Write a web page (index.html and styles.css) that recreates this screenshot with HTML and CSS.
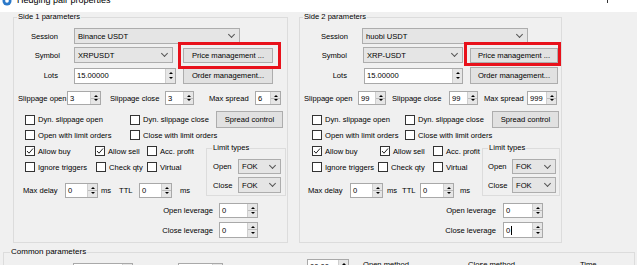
FILE: index.html
```html
<!DOCTYPE html>
<html lang="en">

<head>
    <meta charset="UTF-8">
    <title>Hedging pair properties</title>
    <link rel="stylesheet" href="styles.css">
</head>

<body>
    <!-- window title, cut off at the top -->
    <div class="titlebar">
        <svg class="title-icon" width="10" height="10" viewBox="0 0 10 10">
            <circle cx="5" cy="5" r="4.5" fill="#2b79c9" />
            <circle cx="5" cy="5" r="1.8" fill="#fff" />
        </svg>
        <span class="title-text">Hedging pair properties</span>
        <span class="title-btn"></span>
    </div>

    <div class="dialog">
        <!-- side 1 -->
        <div class="group side side1">
            <span class="group-title">Side 1 parameters</span>
            <div class="row row-session">
                <span class="lbl r l-session">Session</span>
                <div class="combo c-session"><span>Binance USDT</span></div>
            </div>
            <div class="row row-symbol">
                <span class="lbl r l-symbol">Symbol</span>
                <div class="combo c-symbol"><span>XRPUSDT</span></div>
                <div class="mark"><div class="btn b-price">Price management ...</div></div>
            </div>
            <div class="row row-lots">
                <span class="lbl r l-lots">Lots</span>
                <div class="num n-lots"><span>15.00000</span><i class="spin"></i></div>
                <div class="btn b-order">Order management...</div>
            </div>
            <div class="row row-slip">
                <span class="lbl l-slipopen">Slippage open</span>
                <div class="num n-slipopen"><span>3</span><i class="spin"></i></div>
                <span class="lbl l-slipclose">Slippage close</span>
                <div class="num n-slipclose"><span>3</span><i class="spin"></i></div>
                <span class="lbl l-maxspread">Max spread</span>
                <div class="num n-maxspread"><span>6</span><i class="spin"></i></div>
            </div>
            <div class="row row-dyn">
                <label class="chk k-dynopen"><i class="box"></i>Dyn. slippage open</label>
                <label class="chk k-dynclose"><i class="box"></i>Dyn. slippage close</label>
                <div class="btn b-spread">Spread control</div>
            </div>
            <div class="row row-limit">
                <label class="chk k-openlimit"><i class="box"></i>Open with limit orders</label>
                <label class="chk"><i class="box"></i>Close with limit orders</label>
            </div>
            <div class="lower">
                <div class="lower-left">
                    <div class="row row-buy">
                        <label class="chk k-buy"><i class="box"><svg width="8" height="8" viewBox="0 0 8 8"><polyline points="1,4 3,6.2 7,1.5" fill="none" stroke="#222" stroke-width="1" /></svg></i>Allow buy</label>
                        <label class="chk k-sell"><i class="box"><svg width="8" height="8" viewBox="0 0 8 8"><polyline points="1,4 3,6.2 7,1.5" fill="none" stroke="#222" stroke-width="1" /></svg></i>Allow sell</label>
                        <label class="chk"><i class="box"></i>Acc. profit</label>
                    </div>
                    <div class="row row-ignore">
                        <label class="chk k-ignore"><i class="box"></i>Ignore triggers</label>
                        <label class="chk k-qty"><i class="box"></i>Check qty</label>
                        <label class="chk"><i class="box"></i>Virtual</label>
                    </div>
                    <div class="row row-delay">
                        <span class="lbl l-maxdelay">Max delay</span>
                        <div class="num n-maxdelay"><span>0</span><i class="spin"></i></div>
                        <span class="lbl l-ms1">ms</span>
                        <span class="lbl l-ttl">TTL</span>
                        <div class="num n-ttl"><span>0</span><i class="spin"></i></div>
                        <span class="lbl l-ms2">ms</span>
                    </div>
                </div>
                <div class="group limits">
                    <span class="group-title">Limit types</span>
                    <div class="row row-open">
                        <span class="lbl l-open">Open</span>
                        <div class="combo c-open"><span>FOK</span></div>
                    </div>
                    <div class="row row-close">
                        <span class="lbl l-close">Close</span>
                        <div class="combo c-close"><span>FOK</span></div>
                    </div>
                </div>
            </div>
            <div class="row row-lev row-openlev">
                <span class="lbl r l-lev">Open leverage</span>
                <div class="num n-lev"><span>0</span><i class="spin"></i></div>
            </div>
            <div class="row row-lev row-closelev">
                <span class="lbl r l-lev">Close leverage</span>
                <div class="num n-lev"><span>0</span><i class="spin"></i></div>
            </div>
        </div>

        <!-- side 2 -->
        <div class="group side side2">
            <span class="group-title">Side 2 parameters</span>
            <div class="row row-session">
                <span class="lbl r l-session">Session</span>
                <div class="combo c-session"><span>huobi USDT</span></div>
            </div>
            <div class="row row-symbol">
                <span class="lbl r l-symbol">Symbol</span>
                <div class="combo c-symbol"><span>XRP-USDT</span></div>
                <div class="mark"><div class="btn b-price">Price management ...</div></div>
            </div>
            <div class="row row-lots">
                <span class="lbl r l-lots">Lots</span>
                <div class="num n-lots"><span>15.00000</span><i class="spin"></i></div>
                <div class="btn b-order">Order management...</div>
            </div>
            <div class="row row-slip">
                <span class="lbl l-slipopen">Slippage open</span>
                <div class="num n-slipopen"><span>99</span><i class="spin"></i></div>
                <span class="lbl l-slipclose">Slippage close</span>
                <div class="num n-slipclose"><span>99</span><i class="spin"></i></div>
                <span class="lbl l-maxspread">Max spread</span>
                <div class="num n-maxspread"><span>999</span><i class="spin"></i></div>
            </div>
            <div class="row row-dyn">
                <label class="chk k-dynopen"><i class="box"></i>Dyn. slippage open</label>
                <label class="chk k-dynclose"><i class="box"></i>Dyn. slippage close</label>
                <div class="btn b-spread">Spread control</div>
            </div>
            <div class="row row-limit">
                <label class="chk k-openlimit"><i class="box"></i>Open with limit orders</label>
                <label class="chk"><i class="box"></i>Close with limit orders</label>
            </div>
            <div class="lower">
                <div class="lower-left">
                    <div class="row row-buy">
                        <label class="chk k-buy"><i class="box"><svg width="8" height="8" viewBox="0 0 8 8"><polyline points="1,4 3,6.2 7,1.5" fill="none" stroke="#222" stroke-width="1" /></svg></i>Allow buy</label>
                        <label class="chk k-sell"><i class="box"><svg width="8" height="8" viewBox="0 0 8 8"><polyline points="1,4 3,6.2 7,1.5" fill="none" stroke="#222" stroke-width="1" /></svg></i>Allow sell</label>
                        <label class="chk"><i class="box"></i>Acc. profit</label>
                    </div>
                    <div class="row row-ignore">
                        <label class="chk k-ignore"><i class="box"></i>Ignore triggers</label>
                        <label class="chk k-qty"><i class="box"></i>Check qty</label>
                        <label class="chk"><i class="box"></i>Virtual</label>
                    </div>
                    <div class="row row-delay">
                        <span class="lbl l-maxdelay">Max delay</span>
                        <div class="num n-maxdelay"><span>0</span><i class="spin"></i></div>
                        <span class="lbl l-ms1">ms</span>
                        <span class="lbl l-ttl">TTL</span>
                        <div class="num n-ttl"><span>0</span><i class="spin"></i></div>
                        <span class="lbl l-ms2">ms</span>
                    </div>
                </div>
                <div class="group limits">
                    <span class="group-title">Limit types</span>
                    <div class="row row-open">
                        <span class="lbl l-open">Open</span>
                        <div class="combo c-open"><span>FOK</span></div>
                    </div>
                    <div class="row row-close">
                        <span class="lbl l-close">Close</span>
                        <div class="combo c-close"><span>FOK</span></div>
                    </div>
                </div>
            </div>
            <div class="row row-lev row-openlev">
                <span class="lbl r l-lev">Open leverage</span>
                <div class="num n-lev"><span>0</span><i class="spin"></i></div>
            </div>
            <div class="row row-lev row-closelev">
                <span class="lbl r l-lev">Close leverage</span>
                <div class="num n-lev"><span>0<b class="caret"></b></span><i class="spin"></i></div>
            </div>
        </div>
    </div>

    <!-- common parameters, only the top is visible -->
    <div class="group common">
        <span class="group-title">Common parameters</span>
        <div class="row-common">
            <div class="num cm-a"><span></span><i class="spin"></i></div>
            <div class="num cm-b"><span></span><i class="spin"></i></div>
            <div class="num cm-c"><span>00.00</span><i class="spin"></i></div>
            <span class="lbl cm-open">Open method</span>
            <span class="lbl cm-close">Close method</span>
            <span class="lbl cm-t">Time</span>
        </div>
    </div>
</body>

</html>
```

FILE: styles.css
```css
* {
    margin: 0;
    padding: 0;
    box-sizing: border-box;
}

body {
    width: 637px;
    height: 265px;
    overflow: hidden;
    background-color: #f0f0f0;
    font-family: "Liberation Sans", Arial, sans-serif;
    font-size: 7.6px;
    color: #000;
}

/* title bar */
.titlebar {
    height: 12px;
    background-color: #fff;
    display: flex;
    align-items: flex-start;
    overflow: hidden;
}

.title-icon {
    flex: none;
    margin: -4px 0 0 2px;
}

.title-text {
    font-size: 9px;
    line-height: 12px;
    margin: -6px 0 0 5px;
    white-space: nowrap;
}

.title-btn {
    width: 1px;
    height: 3px;
    background-color: #333;
    margin: 0 29px 0 auto;
}

/* group boxes */
.dialog {
    display: flex;
    padding: 5px 0 0 13px;
}

.group {
    position: relative;
    border: 1px solid #dcdcdc;
}

.group-title {
    position: absolute;
    top: -6px;
    left: 3px;
    padding: 0 1px;
    line-height: 10px;
    background-color: #f0f0f0;
    white-space: nowrap;
}

.side {
    height: 226px;
}

.side1 {
    width: 275px;
}

.side2 {
    width: 263px;
    margin-left: 11px;
}

/* rows */
.row {
    display: flex;
    align-items: center;
}

.lbl {
    flex: none;
    white-space: nowrap;
}

.r {
    text-align: right;
}

.row-session {
    margin-top: 10px;
    height: 16px;
}

.row-symbol {
    margin-top: 3px;
    height: 16px;
}

.row-lots {
    margin-top: 4px;
    height: 17px;
}

.row-slip {
    margin-top: 7px;
    height: 14px;
}

.row-dyn {
    margin-top: 6px;
    height: 17px;
}

.row-limit {
    margin-top: 2px;
    height: 10px;
}

.lower {
    display: flex;
    margin-top: 6px;
    height: 52px;
}

.lower-left {
    flex: none;
}

.row-buy {
    height: 10px;
}

.row-ignore {
    margin-top: 6px;
    height: 10px;
}

.row-delay {
    margin-top: 11px;
    height: 15px;
}

.row-openlev {
    margin-top: 5px;
    height: 15px;
}

.row-closelev {
    margin-top: 4px;
    height: 16px;
}

/* controls */
.combo {
    flex: none;
    height: 100%;
    display: flex;
    align-items: center;
    padding: 0 5px 0 3px;
    background-color: #e5e5e5;
    border: 1px solid #adadad;
    white-space: nowrap;
}

.combo span {
    flex: 1;
}

.combo::after {
    content: '';
    width: 4px;
    height: 4px;
    margin-top: -3px;
    border-right: 1px solid #555;
    border-bottom: 1px solid #555;
    transform: rotate(45deg);
}

.num {
    flex: none;
    height: 100%;
    display: flex;
    background-color: #fff;
    border: 1px solid #a9a9a9;
}

.num span {
    flex: 1;
    display: flex;
    align-items: center;
    padding-left: 2px;
    overflow: hidden;
    white-space: nowrap;
}

.spin {
    flex: none;
    width: 10px;
    display: flex;
    flex-direction: column;
    align-items: center;
    justify-content: space-evenly;
    border-left: 1px solid #cfcfcf;
    background: linear-gradient(#e6e6e6 0 calc(50% - 0.5px), #bcbcbc calc(50% - 0.5px) calc(50% + 0.5px), #e6e6e6 calc(50% + 0.5px));
}

.spin::before {
    content: '';
    border-left: 2.5px solid transparent;
    border-right: 2.5px solid transparent;
    border-bottom: 2.5px solid #000;
}

.spin::after {
    content: '';
    border-left: 2.5px solid transparent;
    border-right: 2.5px solid transparent;
    border-top: 2.5px solid #000;
}

.caret {
    display: inline-block;
    width: 1px;
    height: 9px;
    margin-left: 1px;
    background-color: #000;
    vertical-align: middle;
}

.btn {
    flex: none;
    height: 15px;
    display: flex;
    align-items: center;
    justify-content: center;
    background-color: #e1e1e1;
    border: 1px solid #adadad;
    white-space: nowrap;
}

.b-order,
.b-spread {
    height: 17px;
}

.chk {
    flex: none;
    display: flex;
    align-items: center;
    white-space: nowrap;
}

.box {
    flex: none;
    width: 10px;
    height: 10px;
    margin-right: 3px;
    display: flex;
    align-items: center;
    justify-content: center;
    background-color: #fff;
    border: 1px solid #333;
}

/* red annotation frame round the price buttons */
.mark {
    position: relative;
    flex: none;
    display: flex;
}

.mark::after {
    content: '';
    position: absolute;
    border: 3px solid #e8111b;
}

.side1 .mark::after {
    left: -5px;
    right: -8px;
    top: -6px;
    bottom: -6px;
}

.side2 .mark::after {
    left: -6px;
    right: -3px;
    top: -6px;
    bottom: -3px;
}

/* limit types box */
.limits {
    flex: none;
    height: 48px;
    margin-top: 2px;
}

.limits .group-title {
    left: 5px;
}

.row-open {
    margin-top: 10px;
    height: 15px;
}

.row-close {
    margin-top: 3px;
    height: 16px;
}

/* side 1 placement */
.side1 .l-session { width: 44px; }
.side1 .c-session { margin-left: 16px; width: 166px; }
.side1 .l-symbol { width: 46px; }
.side1 .c-symbol { margin-left: 14px; width: 99px; }
.side1 .mark { margin-left: 10px; }
.side1 .b-price { width: 90px; }
.side1 .l-lots { width: 44px; }
.side1 .n-lots { margin-left: 16px; width: 102px; height: 16px; }
.side1 .b-order { margin-left: 7px; width: 90px; }
.side1 .row-slip { padding-left: 4px; }
.side1 .l-slipopen { width: 47px; }
.side1 .n-slipopen { margin-left: 2px; width: 34px; }
.side1 .l-slipclose { margin-left: 9px; width: 50px; }
.side1 .n-slipclose { margin-left: 5px; width: 29px; }
.side1 .l-maxspread { margin-left: 15px; width: 41px; }
.side1 .n-maxspread { margin-left: 5px; width: 26px; }
.side1 .row-dyn,
.side1 .row-limit,
.side1 .row-buy,
.side1 .row-ignore { padding-left: 11px; }
.side1 .k-dynopen,
.side1 .k-openlimit { width: 105px; }
.side1 .k-dynclose { width: 86px; }
.side1 .b-spread { width: 67px; }
.side1 .lower-left { width: 192px; }
.side1 .k-buy { width: 70px; }
.side1 .k-sell { width: 52px; }
.side1 .k-ignore { width: 71px; }
.side1 .k-qty { width: 51px; }
.side1 .row-delay { padding-left: 9px; }
.side1 .l-maxdelay { width: 35px; }
.side1 .n-maxdelay { margin-left: 7px; width: 33px; }
.side1 .l-ms1 { margin-left: 3px; width: 10px; }
.side1 .l-ttl { margin-left: 8px; width: 15px; }
.side1 .n-ttl { margin-left: 5px; width: 33px; }
.side1 .l-ms2 { margin-left: 8px; }
.side1 .limits { width: 80px; }
.side1 .limits .row { padding-left: 6px; }
.side1 .l-open,
.side1 .l-close { width: 25px; }
.side1 .c-open,
.side1 .c-close { width: 43px; }
.side1 .row-lev { padding-left: 146px; }
.side1 .l-lev { width: 53px; }
.side1 .n-lev { margin-left: 6px; width: 39px; }

/* side 2 placement */
.side2 .l-session { width: 48px; }
.side2 .c-session { margin-left: 14px; width: 166px; }
.side2 .l-symbol { width: 47px; }
.side2 .c-symbol { margin-left: 16px; width: 100px; }
.side2 .mark { margin-left: 7px; }
.side2 .b-price { width: 88px; }
.side2 .l-lots { width: 47px; }
.side2 .n-lots { margin-left: 17px; width: 99px; height: 16px; }
.side2 .b-order { margin-left: 7px; width: 88px; }
.side2 .row-slip { padding-left: 4px; }
.side2 .l-slipopen { width: 48px; }
.side2 .n-slipopen { margin-left: 6px; width: 28px; }
.side2 .l-slipclose { margin-left: 6px; width: 50px; }
.side2 .n-slipclose { margin-left: 7px; width: 29px; }
.side2 .l-maxspread { margin-left: 6px; width: 41px; }
.side2 .n-maxspread { margin-left: 2px; width: 30px; }
.side2 .row-dyn,
.side2 .row-limit,
.side2 .row-buy,
.side2 .row-ignore { padding-left: 12px; }
.side2 .k-dynopen,
.side2 .k-openlimit { width: 93px; }
.side2 .k-dynclose { width: 87px; }
.side2 .b-spread { width: 67px; }
.side2 .lower-left { width: 182px; }
.side2 .k-buy { width: 68px; }
.side2 .k-sell { width: 53px; }
.side2 .k-ignore { width: 66px; }
.side2 .k-qty { width: 55px; }
.side2 .row-delay { padding-left: 8px; }
.side2 .l-maxdelay { width: 35px; }
.side2 .n-maxdelay { margin-left: 7px; width: 33px; }
.side2 .l-ms1 { margin-left: 4px; width: 10px; }
.side2 .l-ttl { margin-left: 5px; width: 14px; }
.side2 .n-ttl { margin-left: 4px; width: 34px; }
.side2 .l-ms2 { margin-left: 6px; }
.side2 .limits { width: 78px; }
.side2 .limits .row { padding-left: 5px; }
.side2 .l-open,
.side2 .l-close { width: 24px; }
.side2 .c-open,
.side2 .c-close { width: 44px; }
.side2 .row-lev { padding-left: 143px; }
.side2 .l-lev { width: 53px; }
.side2 .n-lev { margin-left: 7px; width: 40px; }

/* common parameters */
.common {
    width: 632px;
    height: 40px;
    margin: 9px 0 0 3px;
}

.common .group-title {
    left: 6px;
    font-size: 8px;
}

.row-common {
    display: flex;
    align-items: flex-start;
}

.cm-a {
    margin: 10px 0 0 69px;
    width: 60px;
    height: 16px;
}

.cm-b {
    margin: 10px 0 0 45px;
    width: 45px;
    height: 16px;
}

.cm-c {
    margin: 6px 0 0 84px;
    width: 42px;
    height: 15px;
}

.cm-open {
    margin: 7px 0 0 14px;
    width: 105px;
}

.cm-close {
    margin-top: 7px;
    width: 112px;
}

.cm-t {
    margin-top: 7px;
}
```
